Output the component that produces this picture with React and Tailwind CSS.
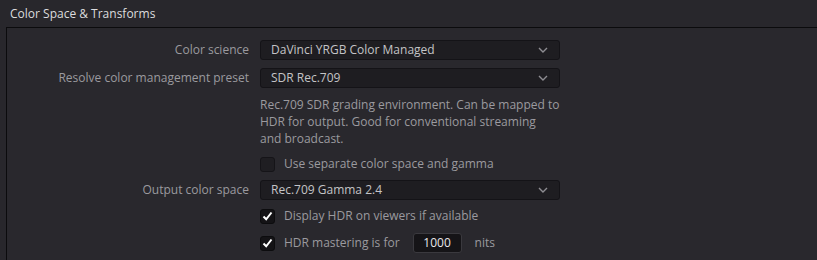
import { useState } from "react";

const font = { fontFamily: '"Open Sans", "Noto Sans", sans-serif' };

function Chevron() {
  return (
    <svg width="10" height="6" viewBox="0 0 10 6" className="shrink-0">
      <path d="M1 1 L5 5 L9 1" fill="none" stroke="#8e8d92" strokeWidth="1.4" />
    </svg>
  );
}

function Select({ value }) {
  return (
    <div className="flex h-[20px] w-[300px] items-center justify-between rounded-[3px] border border-[#141317] bg-[#1e1d21] pl-[10px] pr-[11px] text-[12px] text-[#c4c4c6]">
      <span>{value}</span>
      <Chevron />
    </div>
  );
}

function Checkbox({ checked }) {
  return (
    <div
      className={
        checked
          ? "flex h-[15px] w-[15px] shrink-0 items-center justify-center rounded-[3px] border border-[#0c0c0e] bg-[#141316]"
          : "flex h-[15px] w-[15px] shrink-0 items-center justify-center rounded-[3px] border border-[#151418] bg-[#1f1e22]"
      }
    >
      {checked && (
        <svg width="11" height="10" viewBox="0 0 11 10">
          <path d="M1.5 5.5 L4.2 8.3 L9.5 1.5" fill="none" stroke="#ffffff" strokeWidth="2" />
        </svg>
      )}
    </div>
  );
}

function Row({ label, children, className = "" }) {
  return (
    <div className={"flex items-center " + className}>
      <div className="w-[243px] pr-[1px] text-right text-[12px] text-[#9b9a9f]">{label}</div>
      <div className="ml-[10px] flex items-center">{children}</div>
    </div>
  );
}

export default function App() {
  const [nits] = useState("1000");

  return (
    <div className="h-[260px] w-[817px] overflow-hidden bg-[#28272c]" style={font}>
      <div className="flex h-[27px] items-center pl-[10px] text-[12px] text-[#dcdcde]">
        Color Space &amp; Transforms
      </div>
      <div className="ml-[6px] h-[233px] border-l border-t border-[#0b0b0d] bg-[#29282d] pt-[12px]">
        <Row label="Color science">
          <Select value="DaVinci YRGB Color Managed" />
        </Row>
        <Row label="Resolve color management preset" className="mt-[8px]">
          <Select value="SDR Rec.709" />
        </Row>
        <Row className="mt-[8px]">
          <p className="w-[320px] whitespace-nowrap text-[12px] leading-[17px] text-[#9b9a9f]">
            Rec.709 SDR grading environment. Can be mapped to
            <br />
            HDR for output. Good for conventional streaming
            <br />
            and broadcast.
          </p>
        </Row>
        <Row className="mt-[7px] h-[20px]">
          <Checkbox />
          <span className="ml-[9px] text-[12px] text-[#9b9a9f]">Use separate color space and gamma</span>
        </Row>
        <Row label="Output color space" className="mt-[6px]">
          <Select value="Rec.709 Gamma 2.4" />
        </Row>
        <Row className="mt-[6px] h-[20px]">
          <Checkbox checked />
          <span className="ml-[9px] text-[12px] text-[#9b9a9f]">Display HDR on viewers if available</span>
        </Row>
        <Row className="mt-[7px] h-[20px]">
          <Checkbox checked />
          <span className="ml-[9px] text-[12px] text-[#9b9a9f]">HDR mastering is for</span>
          <div className="ml-[13px] flex h-[20px] w-[49px] items-center justify-center rounded-[3px] border border-[#3a393e] bg-[#151417] text-[12px] text-[#e8e8ea]">
            {nits}
          </div>
          <span className="ml-[13px] text-[12px] text-[#9b9a9f]">nits</span>
        </Row>
      </div>
    </div>
  );
}
